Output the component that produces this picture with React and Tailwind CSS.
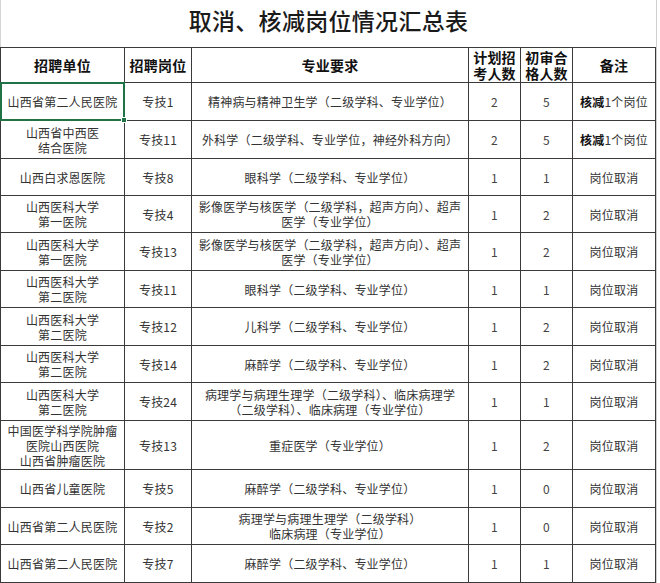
const ROWS = [
    { unit: ['山西省第二人民医院'], post: '专技1', major: ['精神病与精神卫生学（二级学科、专业学位）'], plan: 2, pass: 5, note: 'cut', h: 'h-[38px]', selected: true },
    { unit: ['山西省中西医', '结合医院'], post: '专技11', major: ['外科学（二级学科、专业学位，神经外科方向）'], plan: 2, pass: 5, note: 'cut', h: 'h-[38px]' },
    { unit: ['山西白求恩医院'], post: '专技8', major: ['眼科学（二级学科、专业学位）'], plan: 1, pass: 1, h: 'h-[37px]' },
    { unit: ['山西医科大学', '第一医院'], post: '专技4', major: ['影像医学与核医学（二级学科，超声方向）、超声', '医学（专业学位）'], plan: 1, pass: 2, h: 'h-[37px]' },
    { unit: ['山西医科大学', '第一医院'], post: '专技13', major: ['影像医学与核医学（二级学科，超声方向）、超声', '医学（专业学位）'], plan: 1, pass: 2, h: 'h-[38px]' },
    { unit: ['山西医科大学', '第二医院'], post: '专技11', major: ['眼科学（二级学科、专业学位）'], plan: 1, pass: 1, h: 'h-[37px]' },
    { unit: ['山西医科大学', '第二医院'], post: '专技12', major: ['儿科学（二级学科、专业学位）'], plan: 1, pass: 2, h: 'h-[38px]' },
    { unit: ['山西医科大学', '第二医院'], post: '专技14', major: ['麻醉学（二级学科、专业学位）'], plan: 1, pass: 2, h: 'h-[37px]' },
    { unit: ['山西医科大学', '第二医院'], post: '专技24', major: ['病理学与病理生理学（二级学科）、临床病理学', '（二级学科）、临床病理（专业学位）'], plan: 1, pass: 1, h: 'h-[38px]' },
    { unit: ['中国医学科学院肿瘤', '医院山西医院', '山西省肿瘤医院'], post: '专技13', major: ['重症医学（专业学位）'], plan: 1, pass: 2, h: 'h-[49px]' },
    { unit: ['山西省儿童医院'], post: '专技5', major: ['麻醉学（二级学科、专业学位）'], plan: 1, pass: 0, h: 'h-[38px]' },
    { unit: ['山西省第二人民医院'], post: '专技2', major: ['病理学与病理生理学（二级学科）', '临床病理（专业学位）'], plan: 1, pass: 0, h: 'h-[37px]' },
    { unit: ['山西省第二人民医院'], post: '专技7', major: ['麻醉学（二级学科、专业学位）'], plan: 1, pass: 1, h: 'h-[38px]' },
];

const cell = 'border border-[#3a3a3a] text-center align-middle p-0';

function Lines({ lines }) {
    return lines.map((l, i) => (
        <div key={i} className="whitespace-nowrap">{l}</div>
    ));
}

export default function App() {
    return (
        <div
            className="w-[660px] h-[583px] bg-white overflow-hidden"
            style={{ fontFamily: '"Noto Sans CJK SC", "Liberation Sans", sans-serif' }}
        >
            <div className="w-[657px] border-r border-[#cfcfcf]">
                <div className="h-[47px] border-l border-[#d6d6d6] flex items-start justify-center pt-[4px]">
                    <h1 className="text-[23px] leading-[32px] tracking-[0.3px] text-[#1a1a1a] font-medium">
                        取消、核减岗位情况汇总表
                    </h1>
                </div>

                <table className="border-collapse table-fixed w-[655px] text-[12px] leading-[15px] tracking-[0.2px] text-[#333]">
                    <colgroup>
                        <col className="w-[124px]" />
                        <col className="w-[67px]" />
                        <col className="w-[277px]" />
                        <col className="w-[52px]" />
                        <col className="w-[52px]" />
                        <col className="w-[83px]" />
                    </colgroup>
                    <thead>
                        <tr className="h-[35px] text-[14px] leading-[16px] font-bold text-[#111]">
                            <th className={cell}>招聘单位</th>
                            <th className={cell}>招聘岗位</th>
                            <th className={cell}>专业要求</th>
                            <th className={cell}>
                                <div>计划招</div>
                                <div>考人数</div>
                            </th>
                            <th className={cell}>
                                <div>初审合</div>
                                <div>格人数</div>
                            </th>
                            <th className={cell}>备注</th>
                        </tr>
                    </thead>
                    <tbody>
                        {ROWS.map((r, i) => (
                            <tr key={i} className={r.h}>
                                <td className={`${cell} relative`}>
                                    <Lines lines={r.unit} />
                                    {r.selected && (
                                        <div className="absolute -inset-[1px] border-2 border-[#217346]">
                                            <div className="absolute -right-[4px] -bottom-[4px] w-[6px] h-[6px] bg-[#217346] border border-white" />
                                        </div>
                                    )}
                                </td>
                                <td className={cell}>{r.post}</td>
                                <td className={cell}>
                                    <Lines lines={r.major} />
                                </td>
                                <td className={`${cell} text-[#444]`}>{r.plan}</td>
                                <td className={`${cell} text-[#444]`}>{r.pass}</td>
                                <td className={cell}>
                                    {r.note === 'cut' ? (
                                        <span className="whitespace-nowrap">
                                            <b className="font-bold text-[#111]">核减</b>1个岗位
                                        </span>
                                    ) : (
                                        '岗位取消'
                                    )}
                                </td>
                            </tr>
                        ))}
                    </tbody>
                </table>
            </div>
        </div>
    );
}
